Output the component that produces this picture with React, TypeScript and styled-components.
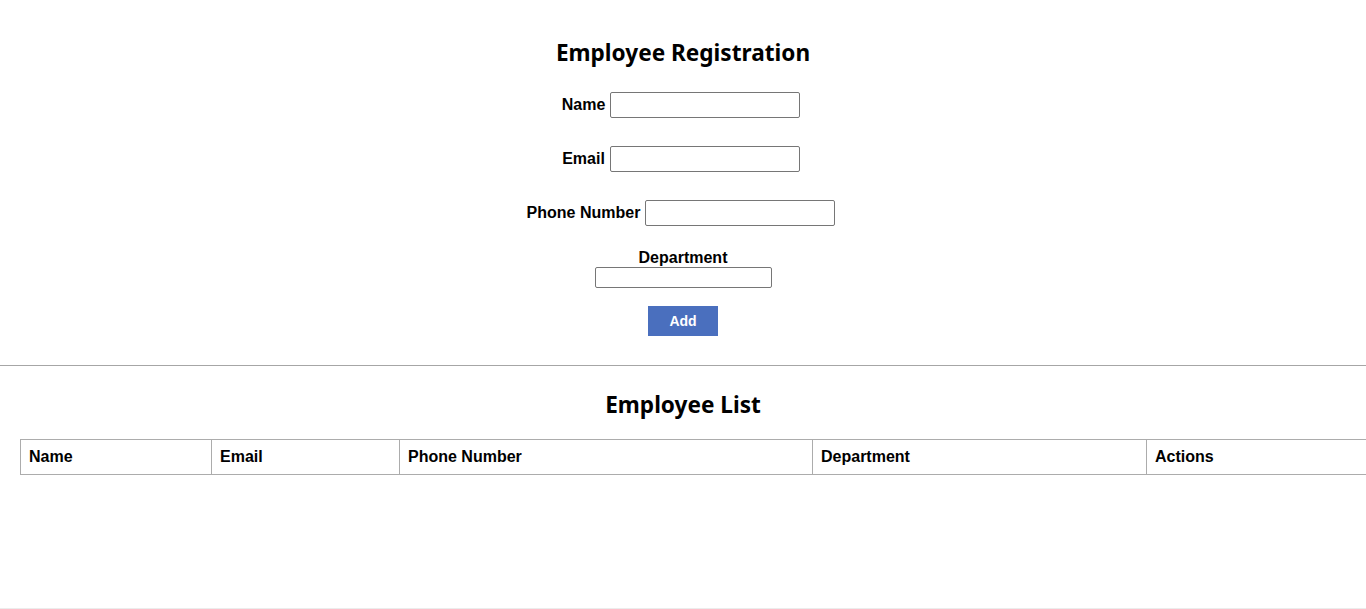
import React from "react";
import styled, { createGlobalStyle } from "styled-components";

const Global = createGlobalStyle`
  html, body { margin: 0; padding: 0; background: #fff; }
  body { overflow: hidden; font-family: "Liberation Sans", Arial, sans-serif; color: #000; }
`;

const Page = styled.div`
  height: 609px;
  box-sizing: border-box;
  border-bottom: 1px solid #ececec;
  overflow: hidden;
`;

const Section = styled.section`
  display: flex;
  flex-direction: column;
  align-items: center;
`;

const Title = styled.h2<{ $top: number; $bottom: number }>`
  font-family: "Noto Sans", "Open Sans", sans-serif;
  font-weight: 700;
  font-size: 22.6px;
  line-height: 32px;
  margin: ${(p) => p.$top}px 0 ${(p) => p.$bottom}px;
`;

const Row = styled.div`
  display: flex;
  align-items: center;
  gap: 5px;
  height: 26px;
  margin-bottom: 28px;
  padding-right: 4px;
`;

const Label = styled.label`
  font-weight: 700;
  font-size: 16px;
  line-height: 18px;
`;

const TextInput = styled.input`
  box-sizing: border-box;
  width: 190px;
  height: 26px;
  border: 1px solid #767676;
  border-radius: 2px;
  padding: 4px;
  font-size: 14px;
`;

const StackRow = styled.div`
  display: flex;
  flex-direction: column;
  align-items: center;
  margin-top: -5px;
`;

const SmallInput = styled.input`
  box-sizing: border-box;
  width: 177px;
  height: 21px;
  border: 1px solid #767676;
  border-radius: 2px;
  padding: 1px 2px;
  font-size: 13px;
`;

const AddButton = styled.button`
  margin-top: 18px;
  width: 70px;
  height: 30px;
  border: none;
  background: #4a6fbe;
  color: #fff;
  font-family: "Liberation Sans", Arial, sans-serif;
  font-weight: 700;
  font-size: 14px;
  padding: 0;
`;

const Rule = styled.hr`
  margin: 29px 0 0;
  border: none;
  border-top: 1px solid #a6a6a6;
  height: 0;
`;

const TableWrap = styled.div`
  padding-left: 20px;
`;

const Table = styled.table`
  width: 1366px;
  border-collapse: collapse;
  table-layout: fixed;
`;

const Th = styled.th`
  border: 1px solid #acacac;
  text-align: left;
  padding: 0 8px;
  height: 35px;
  box-sizing: border-box;
  font-size: 16px;
  font-weight: 700;
`;

const columns = [
  { name: "Name", w: 191 },
  { name: "Email", w: 188 },
  { name: "Phone Number", w: 413 },
  { name: "Department", w: 334 },
  { name: "Actions", w: 240 },
];

export default function App() {
  return (
    <Page>
      <Global />
      <Section>
        <Title $top={37} $bottom={23}>Employee Registration</Title>
        <Row>
          <Label>Name</Label>
          <TextInput type="text" />
        </Row>
        <Row>
          <Label>Email</Label>
          <TextInput type="text" />
        </Row>
        <Row>
          <Label>Phone Number</Label>
          <TextInput type="text" />
        </Row>
        <StackRow>
          <Label>Department</Label>
          <SmallInput type="text" />
        </StackRow>
        <AddButton>Add</AddButton>
      </Section>
      <Rule />
      <Section>
        <Title $top={23} $bottom={18}>Employee List</Title>
      </Section>
      <TableWrap>
        <Table>
          <colgroup>
            {columns.map((c) => (
              <col key={c.name} style={{ width: c.w }} />
            ))}
          </colgroup>
          <thead>
            <tr>
              {columns.map((c) => (
                <Th key={c.name}>{c.name}</Th>
              ))}
            </tr>
          </thead>
        </Table>
      </TableWrap>
    </Page>
  );
}
